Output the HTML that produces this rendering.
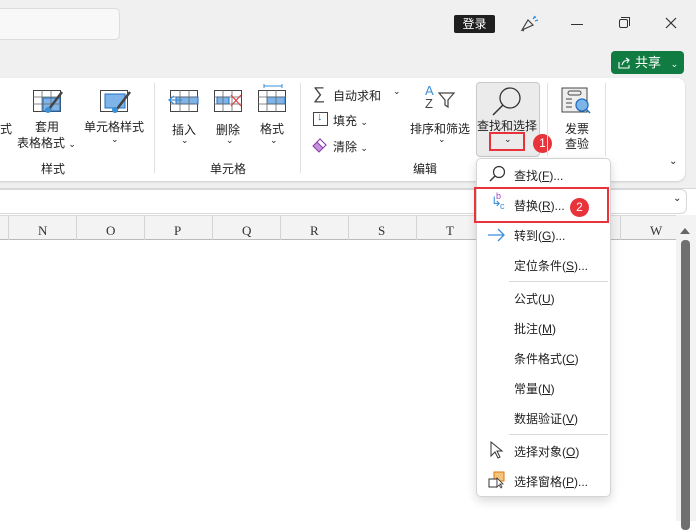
<!DOCTYPE html>
<html><head><meta charset="utf-8"><style>
*{margin:0;padding:0;box-sizing:border-box}
body{width:696px;height:521px;overflow:hidden;background:#fff;font-family:"Liberation Sans","Noto Sans CJK SC",sans-serif;font-size:12px;color:#222;position:relative}
.a{position:absolute}
.t{position:absolute;white-space:nowrap;font-size:12px;color:#222}
.menu .t{font-size:12px}
.ch{position:absolute;top:223px;font-family:"Liberation Serif",serif;font-size:13px;color:#333}
.vl{position:absolute;top:216px;width:1px;height:24px;background:#d4d4d4}
</style></head><body>
<div class="a" style="left:0;top:0;width:696px;height:188px;background:#f0f0f0"></div>
<div class="a" style="left:-10px;top:8px;width:130px;height:32px;background:#f8f8f8;border:1px solid #dcdcdc;border-radius:5px"></div>
<div class="a" style="left:454px;top:15px;width:41px;height:18px;background:#1f1f1f;border-radius:2px;color:#fff;font-size:12px;text-align:center;line-height:18px">登录</div>
<svg class="a" style="left:518px;top:14px" width="22" height="20" viewBox="0 0 22 20"><path d="M4 16 L10 6 L15 11 Z M6 17 L4 16" fill="none" stroke="#444" stroke-width="1.2"/><path d="M15 5 L17 2 M17 7 L20 6 M16 4 L18 3" stroke="#3a8fd9" stroke-width="1.2"/></svg>
<div class="a" style="left:571px;top:24px;width:12px;height:1px;background:#333"></div>
<div class="a" style="left:619px;top:19px;width:9px;height:9px;border:1.2px solid #333;border-radius:2px"></div>
<div class="a" style="left:621px;top:17px;width:9px;height:9px;border-top:1.2px solid #333;border-right:1.2px solid #333"></div>
<svg class="a" style="left:665px;top:17px" width="12" height="12"><path d="M1 1L11 11M11 1L1 11" stroke="#333" stroke-width="1.2"/></svg>
<div class="a" style="left:611px;top:51px;width:73px;height:23px;background:#107c41;border-radius:4px;color:#fff;font-size:13px;line-height:23px;padding-left:24px">共享 <span style="font-size:9px;margin-left:6px">⌄</span></div>
<svg class="a" style="left:617px;top:56px" width="14" height="13"><path d="M2 6v6h10v-3M5 9c1-4 4-5 7-5M9 2l3 2-2 3" fill="none" stroke="#fff" stroke-width="1.1"/></svg>

<div class="a" style="left:-10px;top:78px;width:695px;height:103px;background:#fff;border-radius:8px;box-shadow:0 1px 2px rgba(0,0,0,.15)"></div>
<div class="t" style="left:0;top:120px">式</div>
<svg class="a" style="left:33px;top:90px" width="30" height="24"><rect x="0.5" y="0.5" width="27" height="21" fill="#fff" stroke="#444"/><rect x="10" y="8" width="17" height="13" fill="#7fb4e8" stroke="#1f6fc2"/><path d="M9 0v22M18 0v22M0 7h28M0 14h28" stroke="#666" stroke-width=".8"/><path d="M29 2 L16 19" stroke="#444" stroke-width="2.5"/><circle cx="15" cy="20" r="3" fill="#3a8fd9"/></svg>
<div class="t" style="left:35px;top:118px">套用</div>
<div class="t" style="left:17px;top:134px">表格格式 <span style="font-size:9px">⌄</span></div>
<svg class="a" style="left:100px;top:90px" width="32" height="24"><rect x="0.5" y="0.5" width="27" height="21" fill="#fff" stroke="#444"/><rect x="5" y="4" width="20" height="14" fill="#7fb4e8" stroke="#1f6fc2"/><path d="M30 2 L17 19" stroke="#444" stroke-width="2.5"/><circle cx="15" cy="20" r="3" fill="#3a8fd9"/></svg>
<div class="t" style="left:84px;top:118px">单元格样式</div>
<div class="t" style="left:111px;top:134px;font-size:9px">⌄</div>
<div class="t" style="left:41px;top:160px">样式</div>
<div class="a" style="left:154px;top:83px;width:1px;height:90px;background:#e0e0e0"></div>
<svg class="a" style="left:168px;top:90px" width="32" height="22"><rect x="2.5" y="0.5" width="27" height="21" fill="#fff" stroke="#444"/><rect x="8" y="7" width="22" height="7" fill="#7fb4e8" stroke="#1f6fc2"/><path d="M12 0v22M21 0v22M2 7h28M2 14h28" stroke="#666" stroke-width=".8"/><path d="M14 10H2M6 6L1 10l5 4" fill="none" stroke="#3a8fd9" stroke-width="1.3"/></svg>
<div class="t" style="left:172px;top:121px">插入</div>
<div class="t" style="left:181px;top:135px;font-size:9px">⌄</div>
<svg class="a" style="left:213px;top:90px" width="32" height="22"><rect x="1.5" y="0.5" width="27" height="21" fill="#fff" stroke="#444"/><rect x="4" y="7" width="12" height="7" fill="#7fb4e8" stroke="#1f6fc2"/><path d="M10 0v22M19 0v22M1 7h28M1 14h28" stroke="#666" stroke-width=".8"/><path d="M18 5l10 11M28 5L18 16" stroke="#e0454a" stroke-width="1.3"/></svg>
<div class="t" style="left:216px;top:121px">删除</div>
<div class="t" style="left:226px;top:135px;font-size:9px">⌄</div>
<svg class="a" style="left:258px;top:84px" width="30" height="28"><path d="M6 2h18M6 0v4M24 0v4" stroke="#3a8fd9"/><rect x="0.5" y="6.5" width="27" height="21" fill="#fff" stroke="#444"/><rect x="9" y="13" width="18" height="7" fill="#7fb4e8" stroke="#1f6fc2"/><path d="M9 6v22M18 6v22M0 13h28M0 20h28" stroke="#666" stroke-width=".8"/></svg>
<div class="t" style="left:260px;top:120px">格式</div>
<div class="t" style="left:270px;top:135px;font-size:9px">⌄</div>
<div class="t" style="left:210px;top:160px">单元格</div>
<div class="a" style="left:300px;top:83px;width:1px;height:90px;background:#e0e0e0"></div>
<div class="t" style="left:313px;top:84px;font-size:17px;color:#444">∑</div>
<div class="t" style="left:333px;top:87px">自动求和</div>
<div class="t" style="left:393px;top:86px;font-size:9px">⌄</div>
<div class="a" style="left:313px;top:112px;width:15px;height:14px;border:1px solid #444"></div>
<div class="t" style="left:317px;top:111px;color:#1f6fc2;font-size:11px">↓</div>
<div class="t" style="left:333px;top:112px">填充 <span style="font-size:9px">⌄</span></div>
<svg class="a" style="left:312px;top:137px" width="16" height="16"><path d="M1 9l7-7 6 6-7 7z" fill="#c792d9" stroke="#8a3fad"/><path d="M8 2l6 6-3 3-6-6z" fill="#fff" stroke="#8a3fad"/></svg>
<div class="t" style="left:333px;top:138px">清除 <span style="font-size:9px">⌄</span></div>
<div class="t" style="left:425px;top:84px;font-size:13px;color:#3a8fd9;line-height:13px">A</div>
<div class="t" style="left:425px;top:97px;font-size:13px;color:#444;line-height:13px">Z</div>
<svg class="a" style="left:438px;top:92px" width="18" height="16"><path d="M1 1h15l-6 7v7l-3-2V8z" fill="none" stroke="#444" stroke-width="1.2"/></svg>
<div class="t" style="left:410px;top:120px">排序和筛选</div>
<div class="t" style="left:438px;top:134px;font-size:9px">⌄</div>
<div class="t" style="left:413px;top:160px">编辑</div>
<div class="a" style="left:476px;top:82px;width:64px;height:75px;background:#ebebeb;border:1px solid #c8c8c8;border-radius:4px"></div>
<svg class="a" style="left:490px;top:86px" width="34" height="32"><circle cx="20" cy="12" r="10" fill="none" stroke="#333" stroke-width="1.3"/><path d="M13 19L3 29" stroke="#333" stroke-width="1.5"/></svg>
<div class="t" style="left:477px;top:117px">查找和选择</div>
<div class="a" style="left:489px;top:132px;width:36px;height:19px;border:2px solid #e8333a"></div>
<div class="t" style="left:504px;top:134px;font-size:9px">⌄</div>
<div class="a" style="left:533px;top:134px;width:19px;height:19px;border-radius:50%;background:#e8333a;color:#fff;font-size:12px;text-align:center;line-height:19px">1</div>
<div class="a" style="left:547px;top:83px;width:1px;height:73px;background:#e0e0e0"></div>
<svg class="a" style="left:561px;top:87px" width="32" height="30"><rect x="1" y="1" width="25" height="24" fill="#eee" stroke="#444"/><rect x="7" y="4" width="13" height="4" rx="2" fill="none" stroke="#444"/><path d="M5 12h6M5 16h6M5 20h6" stroke="#444"/><circle cx="21" cy="18" r="6" fill="#7fb4e8" stroke="#1f6fc2" stroke-width="1.3"/><path d="M25 22l4 4" stroke="#1f6fc2" stroke-width="1.5"/></svg>
<div class="t" style="left:565px;top:120px">发票</div>
<div class="t" style="left:565px;top:135px">查验</div>
<div class="a" style="left:605px;top:83px;width:1px;height:73px;background:#e0e0e0"></div>
<div class="t" style="left:669px;top:156px;font-size:10px">⌄</div>

<div class="a" style="left:0;top:188px;width:696px;height:1px;background:#d8d8d8"></div>
<div class="a" style="left:-10px;top:189px;width:697px;height:25px;background:#fff;border:1px solid #d8d8d8;border-radius:6px"></div>
<div class="t" style="left:673px;top:193px;font-size:10px">⌄</div>
<div class="a" style="left:0;top:215px;width:676px;height:25px;background:#f3f3f3;border-top:1px solid #dadada;border-bottom:1px solid #bbb"></div>
<div class="vl" style="left:8px"></div><div class="vl" style="left:76px"></div><div class="vl" style="left:144px"></div><div class="vl" style="left:212px"></div><div class="vl" style="left:280px"></div><div class="vl" style="left:348px"></div><div class="vl" style="left:416px"></div><div class="vl" style="left:484px"></div><div class="vl" style="left:620px"></div>
<div class="ch" style="left:38px">N</div><div class="ch" style="left:106px">O</div><div class="ch" style="left:174px">P</div><div class="ch" style="left:242px">Q</div><div class="ch" style="left:310px">R</div><div class="ch" style="left:378px">S</div><div class="ch" style="left:446px">T</div><div class="ch" style="left:650px">W</div>
<div class="a" style="left:676px;top:215px;width:20px;height:306px;background:#f3f3f3"></div>
<div class="a" style="left:680px;top:228px;width:0;height:0;border-left:5px solid transparent;border-right:5px solid transparent;border-bottom:6px solid #666"></div>
<div class="a" style="left:681px;top:240px;width:9px;height:290px;background:#707070;border-radius:4px"></div>

<div class="a menu" style="left:476px;top:158px;width:135px;height:339px;background:#fff;border:1px solid #d4d4d4;border-radius:5px;box-shadow:0 4px 10px rgba(0,0,0,.15)"></div>
<svg class="a" style="left:488px;top:165px" width="18" height="18"><circle cx="11" cy="7" r="5.5" fill="none" stroke="#333" stroke-width="1.2"/><path d="M7 11L2 16" stroke="#333" stroke-width="1.4"/></svg>
<div class="t" style="left:514px;top:167px">查找(<u>F</u>)...</div>
<div class="a" style="left:474px;top:187px;width:135px;height:36px;border:2px solid #e8333a"></div>
<div class="t" style="left:491px;top:194px;color:#3a8fd9;font-size:13px">↳</div>
<div class="t" style="left:496px;top:191px;color:#a045c0;font-size:9px">b</div>
<div class="t" style="left:500px;top:201px;color:#3a8fd9;font-size:9px">c</div>
<div class="t" style="left:514px;top:197px">替换(<u>R</u>)...</div>
<div class="a" style="left:570px;top:198px;width:19px;height:19px;border-radius:50%;background:#e8333a;color:#fff;font-size:12px;text-align:center;line-height:19px">2</div>
<svg class="a" style="left:487px;top:228px" width="20" height="14"><path d="M1 7h16M11 1l6 6-6 6" fill="none" stroke="#3a8fd9" stroke-width="1.3"/></svg>
<div class="t" style="left:514px;top:227px">转到(<u>G</u>)...</div>
<div class="t" style="left:514px;top:257px">定位条件(<u>S</u>)...</div>
<div class="a" style="left:509px;top:281px;width:99px;height:1px;background:#d8d8d8"></div>
<div class="t" style="left:514px;top:290px">公式(<u>U</u>)</div>
<div class="t" style="left:514px;top:320px">批注(<u>M</u>)</div>
<div class="t" style="left:514px;top:350px">条件格式(<u>C</u>)</div>
<div class="t" style="left:514px;top:380px">常量(<u>N</u>)</div>
<div class="t" style="left:514px;top:410px">数据验证(<u>V</u>)</div>
<div class="a" style="left:509px;top:434px;width:99px;height:1px;background:#d8d8d8"></div>
<svg class="a" style="left:490px;top:441px" width="14" height="18"><path d="M1 1v14l4-4 3 6 2-1-3-6h5z" fill="#fff" stroke="#333"/></svg>
<div class="t" style="left:514px;top:443px">选择对象(<u>O</u>)</div>
<svg class="a" style="left:488px;top:471px" width="18" height="18"><rect x="6" y="1" width="10" height="9" fill="#f7c27a" stroke="#d97a10"/><rect x="1" y="8" width="8" height="8" fill="#fff" stroke="#333"/><path d="M9 7v9l2-2 2 3 1-1-2-3h3z" fill="#fff" stroke="#333" stroke-width=".8"/></svg>
<div class="t" style="left:514px;top:473px">选择窗格(<u>P</u>)...</div>
</body></html>
